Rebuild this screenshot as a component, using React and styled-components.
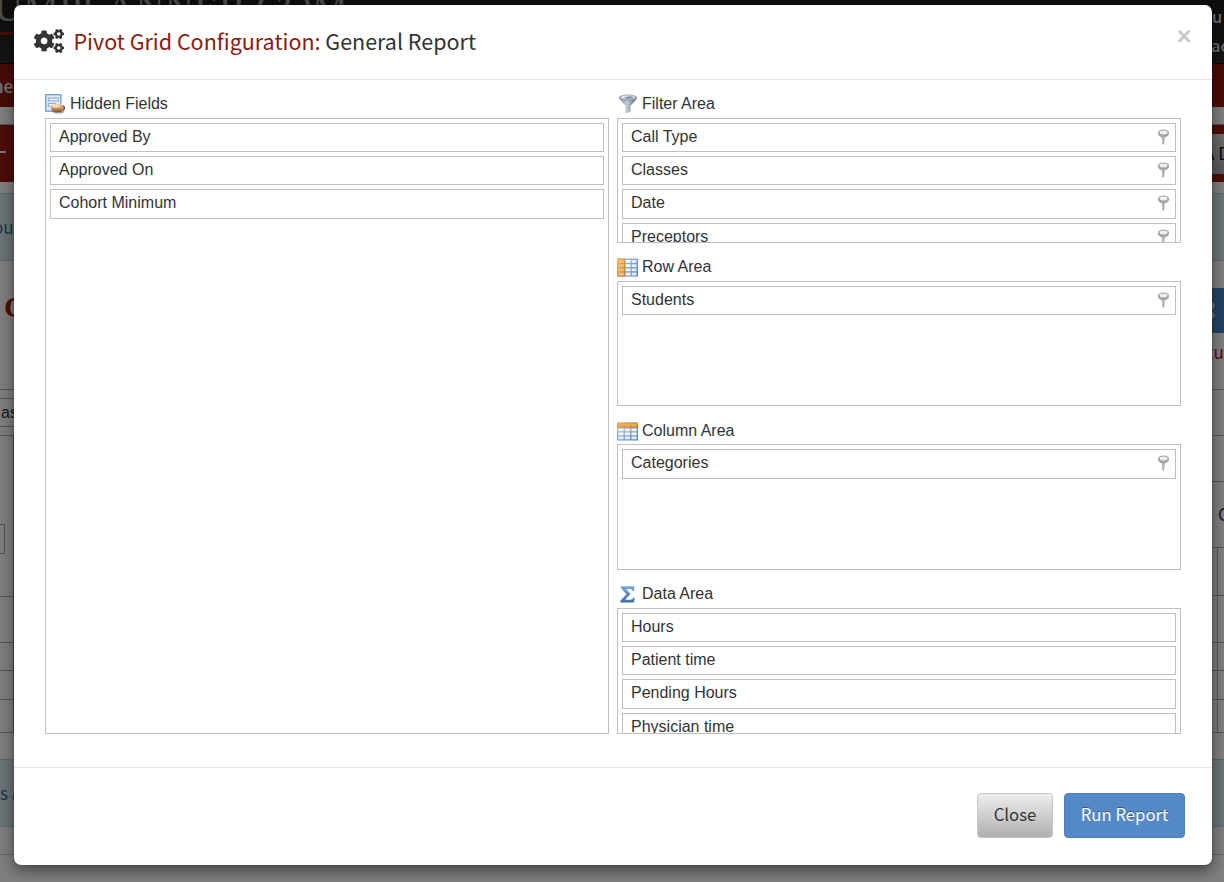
import React from "react";
import styled, { createGlobalStyle } from "styled-components";
import { FaCogs } from "react-icons/fa";

const GlobalStyle = createGlobalStyle`
  *, *::before, *::after { box-sizing: border-box; }
  html, body { margin: 0; padding: 0; overflow: hidden; }
  body {
    font-family: "Liberation Sans", Arial, sans-serif;
    font-size: 16px;
    color: #333;
    background: #fff;
  }
`;

const sourceSans = `"Noto Sans CJK SC", "Open Sans", sans-serif`;

/* ---------- page behind the dialog ---------- */

const Page = styled.div`
  position: relative;
  width: 1224px;
  height: 882px;
  overflow: hidden;
  background: #fff;
`;

const Band = styled.div`
  display: flex;
  justify-content: space-between;
  align-items: ${(p) => p.$align || "center"};
  height: ${(p) => p.$h}px;
  background: ${(p) => p.$bg || "transparent"};
  border-top: ${(p) => (p.$top ? `1px solid ${p.$top}` : "0")};
  border-bottom: ${(p) => (p.$bottom ? `1px solid ${p.$bottom}` : "0")};
`;

const Brand = styled.div`
  width: 360px;
  height: 35px;
  border-bottom: 3px solid #8c1d14;
  font: 40px/40px "Liberation Serif", serif;
  color: #969696;
  white-space: nowrap;
  span {
    display: block;
    margin: -12px 0 0 -6px;
    letter-spacing: 0.3px;
  }
`;

const UserLinks = styled.div`
  width: 13px;
  padding-top: 2px;
  font: 500 16.5px/29px ${sourceSans};
  color: #ddd;
  white-space: nowrap;
  div:first-child {
    padding-left: 1px;
  }
`;

const Snippet = styled.span`
  width: 14px;
  margin-left: ${(p) => p.$shift || 0}px;
  white-space: nowrap;
  color: ${(p) => p.$color};
  font: ${(p) => p.$font || `17px/24px ${sourceSans}`};
`;

const Dash = styled.span`
  width: 6px;
  height: 2px;
  margin-top: -3px;
  background: #eee;
`;

const GrayButton = styled.span`
  width: 14px;
  height: 40px;
  background: linear-gradient(#d8d8d8, #b0b0b0);
  color: #111;
  font: 17px/38px ${sourceSans};
  white-space: nowrap;
  span {
    margin-left: -6px;
  }
`;

const Columns = styled.div`
  display: flex;
  justify-content: space-between;
`;

const Edge = styled.div`
  width: ${(p) => p.$w}px;
  height: 498px;
  display: flex;
  flex-direction: column;
`;

const Cell = styled.div`
  flex: none;
  display: flex;
  align-items: center;
  height: ${(p) => p.$h}px;
  padding-bottom: ${(p) => p.$pb || 0}px;
  border-bottom: ${(p) => (p.$open ? "0" : "1px solid #a8a8a8")};
  border-right: ${(p) => (p.$side === "right" ? "1px solid #909090" : "0")};
  white-space: nowrap;
`;

const Stub = styled.span`
  width: 5px;
  height: 30px;
  border: 1px solid #a0a0a0;
  border-left: 0;
`;

const GridStub = styled.span`
  width: 7px;
  height: 100%;
  border-right: 1px solid #a8a8a8;
`;

const BlueButton = styled.span`
  display: flex;
  align-items: center;
  width: 13px;
  height: 45px;
  background: #4a86cd;
  svg {
    flex: none;
    margin-left: -17px;
    color: #eee;
  }
`;

const Backdrop = styled.div`
  position: absolute;
  inset: 0;
  background: rgba(0, 0, 0, 0.5);
`;

/* ---------- dialog ---------- */

const Dialog = styled.section`
  position: absolute;
  top: 5px;
  left: 14px;
  width: 1198px;
  height: 860px;
  display: flex;
  flex-direction: column;
  background: #fff;
  border-radius: 7px;
  box-shadow: 0 5px 15px rgba(0, 0, 0, 0.5), 0 0 1px rgba(0, 0, 0, 0.7);
`;

const DialogHeader = styled.header`
  flex: none;
  display: flex;
  height: 75px;
  padding: 0 20px;
  border-bottom: 1px solid #e5e5e5;
`;

const TitleIcon = styled(FaCogs)`
  flex: none;
  width: 30px;
  height: 24px;
  margin-top: 24px;
  color: #333;
`;

const Title = styled.h4`
  flex: 1;
  margin: 19px 0 0 9.5px;
  font: 400 21.5px/34px ${sourceSans};
  color: #333;
  white-space: nowrap;
  em {
    font-style: normal;
    color: #8c1a11;
  }
`;

const CloseMark = styled.button`
  width: 16px;
  height: 20px;
  margin: 21px 0 0;
  padding: 0;
  border: 0;
  background: none;
  color: #c9c9c9;
  font: 700 25px/20px "Liberation Sans", Arial, sans-serif;
  margin-right: 0;
`;

const DialogBody = styled.div`
  flex: none;
  display: flex;
  gap: 8px;
  height: 687px;
  padding: 8.8px 31px 0;
`;

const Side = styled.div`
  width: 564px;
  display: flex;
  flex-direction: column;
`;

const Area = styled.div`
  height: ${(p) => (p.$tall ? 650 : 163.33)}px;
`;

const AreaLabel = styled.div`
  display: flex;
  align-items: center;
  height: 29px;
  padding-top: 1.2px;
  gap: 4px;
  line-height: 20px;
  svg {
    margin-top: 1px;
  }
`;

const FieldList = styled.div`
  height: ${(p) => p.$h}px;
  padding: 4px;
  border: 1px solid #bfbfbf;
  overflow: hidden;
`;

const Field = styled.div`
  display: flex;
  justify-content: space-between;
  height: 29.33px;
  margin-bottom: 4px;
  padding: 0 5px 0 8px;
  border: 1px solid #bfbfbf;
  line-height: 26px;
  svg {
    margin-top: 4px;
  }
`;

const DialogFooter = styled.footer`
  flex: 1;
  display: flex;
  justify-content: flex-end;
  gap: 11px;
  padding: 25px 27px 0;
  border-top: 1px solid #e5e5e5;
`;

const Button = styled.button`
  width: ${(p) => p.$w}px;
  height: 45px;
  padding: 0 0 2px;
  border: 1px solid ${(p) => (p.$primary ? "#4a80c0" : "#c6c6c6")};
  border-radius: 4px;
  background: ${(p) => (p.$primary ? "#5489c7" : "linear-gradient(#ededed, #b0b0b0)")};
  color: ${(p) => (p.$primary ? "#fff" : "#333")};
  text-shadow: ${(p) => (p.$primary ? "0 -1px 0 rgba(0,0,0,.35)" : "none")};
  font: 400 16.7px/41px ${sourceSans};
`;

/* ---------- icons ---------- */

const HiddenIcon = () => (
  <svg width="21" height="21" viewBox="0 0 21 21">
    <defs>
      <linearGradient id="hf" x1="0" y1="0" x2="0" y2="1">
        <stop offset="0" stopColor="#f3d7a6" />
        <stop offset=".5" stopColor="#cf9a5b" />
        <stop offset="1" stopColor="#7a4c22" />
      </linearGradient>
    </defs>
    <rect x=".7" y=".7" width="15.2" height="16.5" fill="#dde9f7" stroke="#6f9bd0" strokeWidth="1.3" />
    <rect x="3.3" y="4.2" width="10" height="2.6" fill="#fff" stroke="#7da5d6" />
    <rect x="3.3" y="9.6" width="7" height="2.6" fill="#fff" stroke="#7da5d6" />
    <ellipse cx="13.200" cy="17.200" rx="6" ry="2.400" fill="#555" opacity=".55" />
    <path d="M17.500 11q3 .8 2.600 4.200l-2.300 1.300z" fill="#5b4a3a" />
    <ellipse cx="12.300" cy="14" rx="6.500" ry="4.300" fill="url(#hf)" />
    <ellipse cx="11" cy="12.200" rx="3.600" ry="1.500" fill="#fff" opacity=".5" />
  </svg>
);

const FunnelIcon = () => (
  <svg width="21" height="21" viewBox="0 0 21 21">
    <defs>
      <linearGradient id="fn" x1="0" x2="1">
        <stop offset="0" stopColor="#7b8797" />
        <stop offset=".45" stopColor="#c3ccd8" />
        <stop offset="1" stopColor="#4b5a70" />
      </linearGradient>
    </defs>
    <path d="M2 3.500q.3 2.200 6.600 8V19.800l5-2.200v-6.100q6-5.500 6.300-8z" fill="url(#fn)" />
    <ellipse cx="11" cy="3.600" rx="9" ry="3" fill="#8c99ab" />
    <ellipse cx="11" cy="3.300" rx="7.500" ry="2" fill="#dde3ea" />
    <path d="M7 3.900q5 2 10-.2-3-1.600-5-1.300t-5 1.500z" fill="#7c8a9d" />
  </svg>
);

const TableIcon = ({ row }) => (
  <svg width="21" height="19" viewBox="0 0 21 19">
    <defs>
      <linearGradient id="tb" x1="0" y1="0" x2="1" y2="1">
        <stop offset="0" stopColor="#b3cbea" />
        <stop offset="1" stopColor="#4f7dbd" />
      </linearGradient>
      <linearGradient id="to" x1="0" y1="0" x2="1" y2="1">
        <stop offset="0" stopColor="#eeb565" />
        <stop offset="1" stopColor="#c9752a" />
      </linearGradient>
    </defs>
    <rect x="0" y=".5" width="21" height="18" fill="url(#tb)" />
    {row ? (
      <>
        <rect x="0" y=".5" width="8" height="18" fill="url(#to)" />
        {[2, 6.2, 10.4, 14.6].map((y) => (
          <g key={y}>
            <rect x="1.300" y={y} width="5.500" height="2.900" fill="#f4c27c" />
            <rect x="8.600" y={y} width="5" height="2.900" fill="#f4f8fd" />
            <rect x="14.700" y={y} width="4.800" height="2.900" fill="#e6eef9" />
          </g>
        ))}
      </>
    ) : (
      <>
        <rect x="0" y=".5" width="21" height="5.500" fill="url(#to)" />
        {[1.3, 7.8, 14.4].map((x) => (
          <g key={x}>
            <rect x={x} y="2" width="5.300" height="2.600" fill="#e8ab60" />
            <rect x={x} y="6.400" width="5.300" height="2.900" fill="#f4f8fd" />
            <rect x={x} y="10.400" width="5.300" height="2.900" fill="#f4f8fd" />
            <rect x={x} y="14.400" width="5.300" height="2.900" fill="#e6eef9" />
          </g>
        ))}
      </>
    )}
  </svg>
);

const SigmaIcon = () => (
  <svg width="21" height="19" viewBox="0 0 21 19">
    <defs>
      <linearGradient id="sg" x1="0" y1="0" x2="0" y2="1">
        <stop offset="0" stopColor="#79a8dc" />
        <stop offset="1" stopColor="#3f6cb0" />
      </linearGradient>
    </defs>
    <path
      d="M3.800 1.300h13.400v4.600h-1.500q-.4-2-2.600-2H9l4.600 5.200-5.600 5.700h5.400q2.300 0 2.900-2.100h1.400l-.7 4.700H3.400v-1.600l6-6.600L3.800 3z"
      fill="url(#sg)"
    />
  </svg>
);

const PinIcon = () => (
  <svg width="13" height="18" viewBox="0 0 13 18">
    <path d="M1 5.200q.2 3 4 4.300L5.300 16l1.700.7.800-7.200q4-1.300 4.200-4.300z" fill="#a9a9a9" />
    <ellipse cx="6.500" cy="5" rx="5.600" ry="3.400" fill="#a2a2a2" />
    <ellipse cx="6.500" cy="4.500" rx="4" ry="1.900" fill="#f0f0f0" />
    <path d="M6 9.500v5" stroke="#c4c4c4" strokeWidth=".7" />
  </svg>
);

const AreaBox = ({ icon, title, fields, pins, tall, listHeight = 125.3 }) => (
  <Area $tall={tall}>
    <AreaLabel>
      {icon}
      <span>{title}</span>
    </AreaLabel>
    <FieldList $h={listHeight}>
      {fields.map((name) => (
        <Field key={name}>
          <span>{name}</span>
          {pins && <PinIcon />}
        </Field>
      ))}
    </FieldList>
  </Area>
);

const PageBehind = () => (
  <>
    <Band $h={64} $bg="linear-gradient(#1e1c1c, #2e2927)" $bottom="#101010" $align="flex-start">
      <Brand>
        <span>UMPLANNER.COM</span>
      </Brand>
      <UserLinks>
        <div>u</div>
        <div>ac</div>
      </UserLinks>
    </Band>
    <Band $h={43} $bg="#8e190e">
      <Snippet $color="#eee" $shift={-7} $font={`500 17px/20px ${sourceSans}`}>
        ne
      </Snippet>
    </Band>
    <Band $h={18} $bottom="#aaa" />
    <Band $h={57} $bg="#9b1a10">
      <Dash />
      <GrayButton>
        <span>A D</span>
      </GrayButton>
    </Band>
    <Band $h={11} />
    <Band $h={68} $bg="#d9e8ef" $top="#b5d5de" $bottom="#b5d5de">
      <Snippet $color="#31708f" $shift={-7}>
        ou
      </Snippet>
    </Band>
    <Columns>
      <Edge $w={14}>
        <Cell $h={129} $pb={37}>
          <Snippet $color="#a31a10" $shift={4} $font='700 30px/34px "Liberation Serif", serif'>
            C
          </Snippet>
        </Cell>
        <Cell $h={9} />
        <Cell $h={28}>
          <Snippet $color="#333" $shift={1} $font='16px/22px "Liberation Sans", sans-serif'>
            as
          </Snippet>
        </Cell>
        <Cell $h={9} />
        <Cell $h={88} $open $side="right" />
        <Cell $h={30} $open $side="right">
          <Stub />
        </Cell>
        <Cell $h={43} $side="right" />
        <Cell $h={46} $side="right" />
        <Cell $h={28} $side="right" />
        <Cell $h={29} $side="right" />
        <Cell $h={33} $side="right" />
      </Edge>
      <Edge $w={13}>
        <Cell $h={27} $open />
        <BlueButton>
          <FaCogs size={21} />
        </BlueButton>
        <Cell $h={38} $open>
          <Snippet $color="#a31a10" $shift={-4}>
            tu
          </Snippet>
        </Cell>
        <Cell $h={19} />
        <Cell $h={46} />
        <Cell $h={46} />
        <Cell $h={66} $pb={2}>
          <Snippet $color="#333" $shift={7}>
            C
          </Snippet>
        </Cell>
        {[48, 47, 28, 29, 33].map((h) => (
          <Cell key={h} $h={h}>
            <GridStub />
          </Cell>
        ))}
      </Edge>
    </Columns>
    <Band $h={68} $bg="#d9e8ef" $top="#b5d5de" $bottom="#b5d5de">
      <Snippet $color="#31708f">s a</Snippet>
    </Band>
    <Band $h={28} $bottom="#ccc" />
  </>
);

export default function App() {
  return (
    <Page>
      <GlobalStyle />
      <PageBehind />
      <Backdrop />
      <Dialog>
        <DialogHeader>
          <TitleIcon />
          <Title>
            <em>Pivot Grid Configuration:</em> General Report
          </Title>
          <CloseMark>×</CloseMark>
        </DialogHeader>
        <DialogBody>
          <Side>
            <AreaBox
              tall
              listHeight={615.8}
              icon={<HiddenIcon />}
              title="Hidden Fields"
              fields={["Approved By", "Approved On", "Cohort Minimum"]}
            />
          </Side>
          <Side>
            <AreaBox
              pins
              icon={<FunnelIcon />}
              title="Filter Area"
              fields={["Call Type", "Classes", "Date", "Preceptors"]}
            />
            <AreaBox pins icon={<TableIcon row />} title="Row Area" fields={["Students"]} />
            <AreaBox pins icon={<TableIcon />} title="Column Area" fields={["Categories"]} />
            <AreaBox
              listHeight={126}
              icon={<SigmaIcon />}
              title="Data Area"
              fields={["Hours", "Patient time", "Pending Hours", "Physician time"]}
            />
          </Side>
        </DialogBody>
        <DialogFooter>
          <Button $w={76}>Close</Button>
          <Button $w={121} $primary>
            Run Report
          </Button>
        </DialogFooter>
      </Dialog>
    </Page>
  );
}
